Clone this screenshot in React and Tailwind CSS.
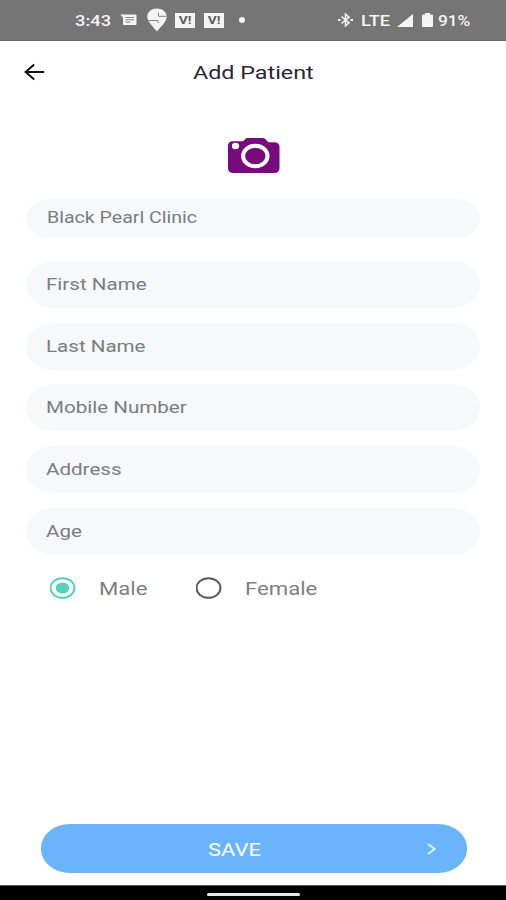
import { useState } from 'react';

const fields = ['First Name', 'Last Name', 'Mobile Number', 'Address', 'Age'];

function ViBadge({ className }) {
  return (
    <span className={`flex h-[15px] w-5 items-center justify-center bg-[#f4f4f4] ${className}`}>
      <span className="scale-x-125 text-[11px] font-bold leading-none text-[#5f5f5f]">V!</span>
    </span>
  );
}

function StatusBar() {
  return (
    <header className="flex h-[41px] shrink-0 items-center border-b border-[#686868] bg-[#757575] pl-[75px] text-[#f4f4f4]">
      <span className="w-[45px] pt-[2px] text-[15px] font-medium leading-none">
        <span className="inline-block origin-left scale-x-122">3:43</span>
      </span>
      <svg className="h-3 w-[17px]" viewBox="0 0 17 12">
        <path d="M0 .5h15.5q1 0 1 1v8.500q0 1-1 1H4q-1 0-1-1V3.500z" fill="currentColor" />
        <path d="M5.500 3.500h8.500M5.500 5.800h8.500M5.500 8.100h5" stroke="#858585" strokeWidth="1" />
      </svg>
      <svg className="ml-[10px] h-6 w-5" viewBox="0 0 20 24">
        <path d="M10 .500C4.500.500.300 4 .300 8.500c0 1.800.6 3.600 1.700 5.200C4 17 7.500 20.500 10 23.500c3.500-4.500 9.400-9.500 9.700-14.500C19.700 4 15.500.500 10 .500z" fill="currentColor" />
        <path d="M11.500 4.500v3.800h8M1.500 12.500h9.500v2.500" fill="none" stroke="#858585" strokeWidth="1" />
      </svg>
      <ViBadge className="ml-2" />
      <ViBadge className="ml-[9px]" />
      <span className="ml-[15px] h-[6px] w-[6px] rounded-full bg-[#f4f4f4]" />
      <svg className="ml-[93px] h-[14px] w-[15px]" viewBox="0 0 15 14" fill="none" stroke="currentColor" strokeWidth="1.600">
        <path d="M3.500 3.500l7.500 6.300L7.500 13V1L11 4.200 3.500 10.500" />
        <path d="M0 7h2.500M12.500 7H15" strokeWidth="2" />
      </svg>
      <span className="ml-[8px] w-[36px] pt-[2px] text-[15px] font-medium leading-none">
        <span className="inline-block origin-left scale-x-122">LTE</span>
      </span>
      <svg className="h-[13px] w-4" viewBox="0 0 16 13">
        <path d="M16 0v13H0z" fill="currentColor" />
      </svg>
      <svg className="ml-[9px] h-[14px] w-[11px]" viewBox="0 0 11 14">
        <path d="M3 0h5v1.500h2q1 0 1 1V13q0 1-1 1H1q-1 0-1-1V2.500q0-1 1-1h2z" fill="currentColor" />
      </svg>
      <span className="ml-[5px] pt-[2px] text-[15px] font-medium leading-none">
        <span className="inline-block origin-left scale-x-115">91%</span>
      </span>
    </header>
  );
}

function Radio({ checked, onClick, label, className }) {
  return (
    <button type="button" onClick={onClick} className={`flex items-center ${className}`}>
      <svg className="h-[22px] w-[26px]" viewBox="0 0 26 22" fill="none">
        <ellipse cx="12.500" cy="11" rx="12" ry="9.800" stroke={checked ? '#54d2b8' : '#5c5c5c'} strokeWidth="2" />
        {checked && <ellipse cx="12.500" cy="11" rx="6.800" ry="5.600" fill="#54d2b8" />}
      </svg>
      <span className="ml-[23px] origin-left scale-x-123 pt-[2px] text-[18px] leading-6 text-[#808080]">{label}</span>
    </button>
  );
}

export default function App() {
  const [gender, setGender] = useState('Male');

  return (
    <div className="flex h-[900px] w-[506px] flex-col overflow-hidden bg-white font-[Roboto,sans-serif]">
      <StatusBar />

      <div className="flex h-[62px] items-center pl-6">
        <svg className="h-[18px] w-[21px]" viewBox="0 0 21 18" fill="none" stroke="#111" strokeWidth="2">
          <path d="M20.200 9H2M10.200 1.500L1.600 9l8.600 7.500" />
        </svg>
        <h1 className="ml-[148px] origin-left scale-x-126 pt-[1px] text-[18.500px] leading-6 text-[#2a2638]">Add Patient</h1>
      </div>

      <div className="flex justify-center pt-[35px] pl-px">
        <svg className="h-[35px] w-[52px]" viewBox="0 0 52 35">
          <path d="M5 3.200h10l2.500-2.400q1-.800 2-.800h15.500q1 0 2 .800L40.500 4.200H46q5.500 0 5.500 4.800v21q0 5-5.500 5H5.500Q0 35 0 30V8q0-4.800 5-4.800z" fill="#770b7b" />
          <ellipse cx="7.500" cy="8" rx="3.600" ry="3.200" fill="#fff" />
          <ellipse cx="27.300" cy="18" rx="12.200" ry="10.200" fill="none" stroke="#fff" strokeWidth="4" />
        </svg>
      </div>

      <form className="flex flex-col px-[26px] pt-[26px] text-[#7b7d80]">
        <div className="flex h-[39px] items-center rounded-[24px/20px] bg-[#f6f8fa] pl-[21px] text-[17px]">
          <span className="-mt-px origin-left scale-x-115">Black Pearl Clinic</span>
        </div>
        <div className="mt-[23px] flex flex-col gap-[14.700px]">
          {fields.map((field) => (
            <label key={field} className="flex h-[47px] items-center rounded-[28px/23px] bg-[#f6f8fa] pt-[0.500px] pl-5 text-[17px]">
              <span className="origin-left scale-x-121">{field}</span>
            </label>
          ))}
        </div>
        <div className="mt-5 flex items-center">
          <Radio className="ml-[24px] w-[146px]" label="Male" checked={gender === 'Male'} onClick={() => setGender('Male')} />
          <Radio label="Female" checked={gender === 'Female'} onClick={() => setGender('Female')} />
        </div>
      </form>

      <button type="button" className="mt-auto mr-[39px] mb-3 ml-[40.500px] flex h-[49px] shrink-0 items-center rounded-[29px/24px] bg-[#69b4fa] pl-[167px] text-white">
        <span className="w-[219.500px] pt-[2px] text-left text-[19px] leading-none">
          <span className="inline-block origin-left scale-x-116">SAVE</span>
        </span>
        <svg className="h-3 w-[9px]" viewBox="0 0 9 12" fill="none" stroke="#d9f0ff" strokeWidth="2.200">
          <path d="M1 1l6.500 5L1 11" />
        </svg>
      </button>

      <footer className="flex h-[15px] shrink-0 justify-center border-t border-[#555] bg-black pt-[7px]">
        <span className="h-[3px] w-[93px] rounded-full bg-[#e8e8e8]" />
      </footer>
    </div>
  );
}
